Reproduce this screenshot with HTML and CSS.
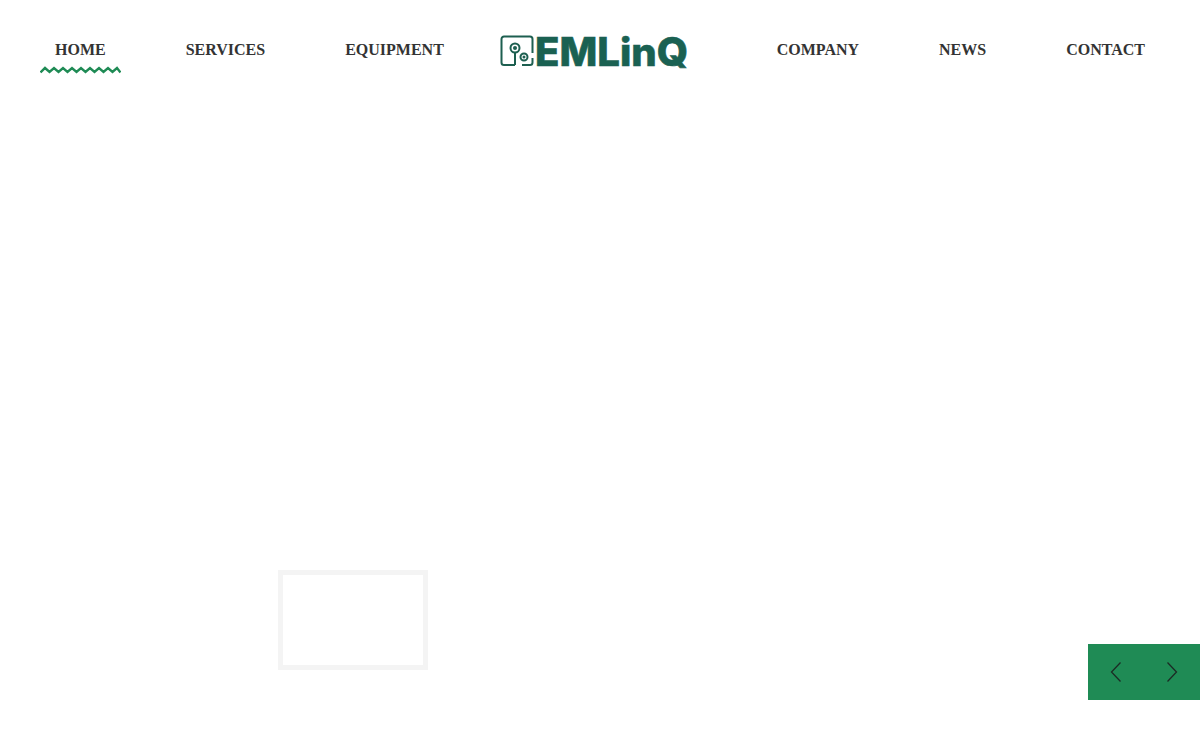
FILE: index.html
```html
<!DOCTYPE html>
<html lang="en">
<head>
    <meta charset="UTF-8">
    <meta name="viewport" content="width=device-width, initial-scale=1.0">
    <title>EMLinQ</title>
    <link rel="stylesheet" href="styles.css">
</head>
<body>
    <header class="site-header">
        <nav class="nav nav-left">
            <a class="nav-link active" href="#">HOME
                <svg class="wave" viewBox="0 0 81 8" width="81" height="8">
                    <path d="M0.5 6.5 L5 2 L9.5 6 L14 2 L18.5 6 L23 2 L27.5 6 L32 2 L36.5 6 L41 2 L45.5 6 L50 2 L54.5 6 L59 2 L63.5 6 L68 2 L72.5 6 L77 2 L80.5 6.5"></path>
                </svg>
            </a>
            <a class="nav-link" href="#">SERVICES</a>
            <a class="nav-link" href="#">EQUIPMENT</a>
        </nav>
        <a class="logo" href="#">
            <svg viewBox="0 0 188 32" width="188" height="32">
                <g class="logo-lines">
                    <path d="M15 30 H4 a2.5 2.5 0 0 1 -2.5 -2.5 V4 a2.5 2.5 0 0 1 2.5 -2.5 H30 a2.5 2.5 0 0 1 2.5 2.5 V18"></path>
                    <path d="M32.5 23 V27.5 a2.5 2.5 0 0 1 -2.5 2.5 H22"></path>
                    <path d="M15 18 V30"></path>
                    <circle cx="15" cy="13" r="4.5"></circle>
                    <circle cx="24" cy="22" r="3.5"></circle>
                </g>
                <circle class="logo-dot" cx="15" cy="13" r="2"></circle>
                <circle class="logo-dot" cx="24" cy="22" r="1.5"></circle>
                <text class="logo-text" x="35" y="30.5" textLength="153" lengthAdjust="spacingAndGlyphs">EMLinQ</text>
            </svg>
        </a>
        <nav class="nav nav-right">
            <a class="nav-link" href="#">COMPANY</a>
            <a class="nav-link" href="#">NEWS</a>
            <a class="nav-link" href="#">CONTACT</a>
        </nav>
    </header>

    <main class="slider">
        <div class="thumb-frame"></div>
        <div class="slider-arrows">
            <button class="arrow" type="button" aria-label="Previous">
                <svg viewBox="0 0 12 20" width="12" height="20"><path d="M10.5 0.5 L1.5 10 L10.5 19.5"></path></svg>
            </button>
            <button class="arrow" type="button" aria-label="Next">
                <svg viewBox="0 0 12 20" width="12" height="20"><path d="M1.5 0.5 L10.5 10 L1.5 19.5"></path></svg>
            </button>
        </div>
    </main>
</body>
</html>
```

FILE: styles.css
```css
body {
    margin: 0;
    background: #fff;
    font-family: "Liberation Serif", "Times New Roman", serif;
    color: #333;
    overflow: hidden;
}

.site-header {
    display: flex;
    align-items: flex-start;
    height: 100px;
    padding: 0 40px;
    box-sizing: border-box;
}

.nav {
    display: flex;
    gap: 50px;
    padding-top: 40px;
}

.nav-right {
    margin-left: auto;
}

.nav-link {
    position: relative;
    display: block;
    padding: 0 15px;
    font-size: 16px;
    font-weight: bold;
    line-height: 20px;
    color: #333;
    text-decoration: none;
}

.wave {
    position: absolute;
    left: 0;
    top: 26px;
    display: block;
}

.wave path {
    fill: none;
    stroke: #1f8b55;
    stroke-width: 2.4;
}

.logo {
    display: block;
    margin: 35px 0 0 41px;
}

.logo svg {
    display: block;
    overflow: visible;
}

.logo-lines {
    fill: none;
    stroke: #1d5f50;
    stroke-width: 2;
}

.logo-dot {
    fill: #1d5f50;
}

.logo-text {
    font-family: Inter, "Liberation Sans", sans-serif;
    font-size: 39px;
    font-weight: 800;
    fill: #1a6152;
    stroke: #1a6152;
    stroke-width: 0.6;
}

.slider {
    position: relative;
    height: 650px;
}

.thumb-frame {
    position: absolute;
    left: 278px;
    top: 470px;
    width: 150px;
    height: 100px;
    box-sizing: border-box;
    border: 5px solid #f4f4f4;
}

.slider-arrows {
    position: absolute;
    right: 0;
    top: 544px;
    display: flex;
}

.arrow {
    display: flex;
    align-items: center;
    justify-content: center;
    width: 56px;
    height: 56px;
    padding: 0;
    border: 0;
    background: #1f8b55;
}

.arrow path {
    fill: none;
    stroke: #1c2b25;
    stroke-width: 1.3;
}
```
